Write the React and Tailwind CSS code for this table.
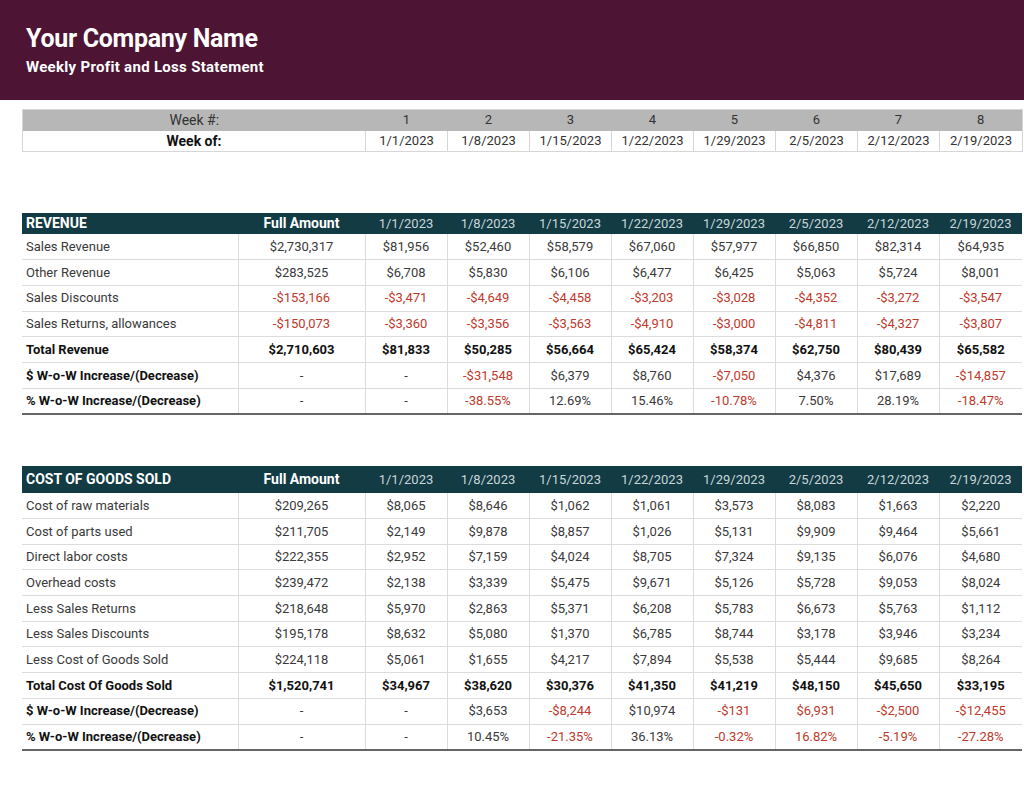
import React from "react";

const dates = ["1/1/2023","1/8/2023","1/15/2023","1/22/2023","1/29/2023","2/5/2023","2/12/2023","2/19/2023"];

const revenue = [
  { label: "Sales Revenue", full: "$2,730,317", vals: ["$81,956","$52,460","$58,579","$67,060","$57,977","$66,850","$82,314","$64,935"] },
  { label: "Other Revenue", full: "$283,525", vals: ["$6,708","$5,830","$6,106","$6,477","$6,425","$5,063","$5,724","$8,001"] },
  { label: "Sales Discounts", full: "-$153,166", vals: ["-$3,471","-$4,649","-$4,458","-$3,203","-$3,028","-$4,352","-$3,272","-$3,547"] },
  { label: "Sales Returns, allowances", full: "-$150,073", vals: ["-$3,360","-$3,356","-$3,563","-$4,910","-$3,000","-$4,811","-$4,327","-$3,807"] },
];
const revTotal = { label: "Total Revenue", full: "$2,710,603", vals: ["$81,833","$50,285","$56,664","$65,424","$58,374","$62,750","$80,439","$65,582"] };
const revDollar = { label: "$ W-o-W Increase/(Decrease)", full: "-", vals: ["-","-$31,548","$6,379","$8,760","-$7,050","$4,376","$17,689","-$14,857"], red: [false,true,false,false,true,false,false,true] };
const revPct = { label: "% W-o-W Increase/(Decrease)", full: "-", vals: ["-","-38.55%","12.69%","15.46%","-10.78%","7.50%","28.19%","-18.47%"], red: [false,true,false,false,true,false,false,true] };

const cogs = [
  { label: "Cost of raw materials", full: "$209,265", vals: ["$8,065","$8,646","$1,062","$1,061","$3,573","$8,083","$1,663","$2,220"] },
  { label: "Cost of parts used", full: "$211,705", vals: ["$2,149","$9,878","$8,857","$1,026","$5,131","$9,909","$9,464","$5,661"] },
  { label: "Direct labor costs", full: "$222,355", vals: ["$2,952","$7,159","$4,024","$8,705","$7,324","$9,135","$6,076","$4,680"] },
  { label: "Overhead costs", full: "$239,472", vals: ["$2,138","$3,339","$5,475","$9,671","$5,126","$5,728","$9,053","$8,024"] },
  { label: "Less Sales Returns", full: "$218,648", vals: ["$5,970","$2,863","$5,371","$6,208","$5,783","$6,673","$5,763","$1,112"] },
  { label: "Less Sales Discounts", full: "$195,178", vals: ["$8,632","$5,080","$1,370","$6,785","$8,744","$3,178","$3,946","$3,234"] },
  { label: "Less Cost of Goods Sold", full: "$224,118", vals: ["$5,061","$1,655","$4,217","$7,894","$5,538","$5,444","$9,685","$8,264"] },
];
const cogsTotal = { label: "Total Cost Of Goods Sold", full: "$1,520,741", vals: ["$34,967","$38,620","$30,376","$41,350","$41,219","$48,150","$45,650","$33,195"] };
const cogsDollar = { label: "$ W-o-W Increase/(Decrease)", full: "-", vals: ["-","$3,653","-$8,244","$10,974","-$131","$6,931","-$2,500","-$12,455"], red: [false,false,true,false,true,true,true,true] };
const cogsPct = { label: "% W-o-W Increase/(Decrease)", full: "-", vals: ["-","10.45%","-21.35%","36.13%","-0.32%","16.82%","-5.19%","-27.28%"], red: [false,false,true,false,true,true,true,true] };

const RED = "text-[#c0392b]";

function isNeg(v) { return v.startsWith("-$"); }

function ColGroup() {
  return (
    <colgroup>
      <col className="w-[216px]" />
      <col className="w-[127px]" />
      {dates.map((d, i) => <col key={i} className={i === 7 ? "w-[83px]" : "w-[82px]"} />)}
    </colgroup>
  );
}

function DataRow({ row, bold, boldLabel, topDark, bottomDark, useRedFlags }) {
  const rowBorder = topDark ? "border-t border-t-[#3a3a3a]" : "";
  const bottom = bottomDark ? "border-b-2 border-b-[#666]" : "border-b border-b-[#dcdcdc]";
  const weight = bold ? "font-bold text-[#111]" : "text-[#3a3a3a]";
  const labelWeight = bold || boldLabel ? "font-bold text-[#111]" : "text-[#3a3a3a]";
  const cls = (v, i) => {
    let red = useRedFlags ? (i === null ? false : row.red[i]) : isNeg(v);
    if (bold) red = false;
    return red ? RED : "";
  };
  return (
    <tr className={`h-[25.7px] ${rowBorder} ${bottom}`}>
      <td className={`pl-1 text-left ${labelWeight}`}>{row.label}</td>
      <td className={`text-center border-l border-[#dcdcdc] ${weight} ${cls(row.full, null)}`}>{row.full}</td>
      {row.vals.map((v, i) => (
        <td key={i} className={`text-center border-l border-[#dcdcdc] ${weight} ${cls(v, i)}`}>{v}</td>
      ))}
    </tr>
  );
}

function Section({ title, rows, total, dollar, pct, headH }) {
  return (
    <table className="w-[1000px] table-fixed border-collapse text-[13px]">
      <ColGroup />
      <thead>
        <tr className={`bg-[#123b44] ${headH}`}>
          <th className="pl-1 text-left font-bold text-white text-[14px]">{title}</th>
          <th className="text-center font-bold text-white text-[14px]">Full Amount</th>
          {dates.map((d) => (
            <th key={d} className="text-center font-normal text-[#c9d6d9]">{d}</th>
          ))}
        </tr>
      </thead>
      <tbody>
        {rows.map((r) => <DataRow key={r.label} row={r} />)}
        <DataRow row={total} bold topDark />
        <DataRow row={dollar} boldLabel useRedFlags />
        <DataRow row={pct} boldLabel useRedFlags bottomDark />
      </tbody>
    </table>
  );
}

export default function App() {
  return (
    <div className="w-[1024px] h-[801px] bg-white font-['Roboto',_'Liberation_Sans',_sans-serif] overflow-hidden">
      <div className="h-[100px] bg-[#4e1433] pl-[26px] pt-[24px]">
        <div className="text-white font-bold text-[25px] leading-[30px] tracking-[-0.3px]">Your Company Name</div>
        <div className="text-white font-bold text-[15px] leading-[18px] mt-[4px] tracking-[0.3px]">Weekly Profit and Loss Statement</div>
      </div>

      <div className="pl-[22px] pt-[9px]">
        <table className="w-[1000px] table-fixed border-collapse text-[13px] leading-[16px] border border-[#d6d6d6]">
          <colgroup>
            <col className="w-[343px]" />
            {dates.map((d, i) => <col key={i} className={i === 7 ? "w-[83px]" : "w-[82px]"} />)}
          </colgroup>
          <tbody>
            <tr className="h-[21px] bg-[#b7b7b7] text-[#333]">
              <td className="text-center text-[14px]">Week #:</td>
              {dates.map((d, i) => <td key={i} className="text-center">{i + 1}</td>)}
            </tr>
            <tr className="h-[21px] text-[#333]">
              <td className="text-center text-[14px] font-bold text-[#111]">Week of:</td>
              {dates.map((d) => <td key={d} className="text-center border-l border-[#d6d6d6]">{d}</td>)}
            </tr>
          </tbody>
        </table>

        <div className="mt-[61px]">
          <Section title="REVENUE" rows={revenue} total={revTotal} dollar={revDollar} pct={revPct} headH="h-[21px]" />
        </div>

        <div className="mt-[51px]">
          <Section title="COST OF GOODS SOLD" rows={cogs} total={cogsTotal} dollar={cogsDollar} pct={cogsPct} headH="h-[27px]" />
        </div>
      </div>
    </div>
  );
}
